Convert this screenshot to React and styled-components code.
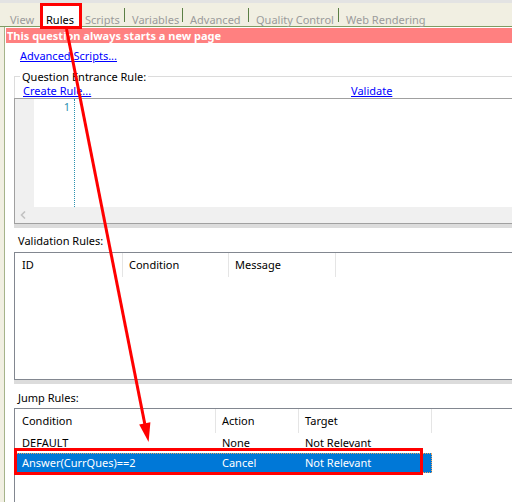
import React from "react";
import styled, { createGlobalStyle } from "styled-components";

const GlobalStyle = createGlobalStyle`
  html, body { margin: 0; padding: 0; background: #ffffff; }
  body {
    font-family: "Noto Sans", "Open Sans", sans-serif;
    font-size: 11px;
    color: #000000;
  }
  * { box-sizing: border-box; }
`;

const Frame = styled.div`
  position: relative;
  width: 512px;
  height: 502px;
  overflow: hidden;
  background: #ffffff;
`;

const TopStrip = styled.div`
  height: 3px;
  background: #e3e3e3;
`;

const TabBar = styled.div`
  display: flex;
  align-items: flex-start;
  height: 24px;
  padding-left: 6px;
  background: #f1efe2;
  border-bottom: 1px solid #7f9b63;
`;

const Tab = styled.div`
  flex: none;
  width: ${(p) => (p.$w ? `${p.$w}px` : "auto")};
  height: ${(p) => (p.$active ? 22 : 21)}px;
  margin-top: 2px;
  padding-top: ${(p) => (p.$active ? 7 : 8)}px;
  padding-left: ${(p) => p.$pad}px;
  line-height: 13px;
  white-space: nowrap;
  color: ${(p) => (p.$active ? "#000000" : "#9b9b9b")};
  background: ${(p) => (p.$active ? "#ffffff" : "transparent")};
  border: ${(p) => (p.$active ? "1px solid #9cae88" : "none")};
  border-bottom: none;
`;

const TabSep = styled.div`
  flex: none;
  width: 1px;
  height: 14px;
  margin-top: 5px;
  background: #5b7f45;
`;

const Body = styled.div`
  display: flex;
  height: 475px;
`;

const SideRail = styled.div`
  flex: none;
  width: 5px;
  background: #f1efe2;
  border-right: 1px solid #a5b38a;
`;

const Panel = styled.div`
  flex: 1;
  min-width: 0;
  padding-top: 1px;
  background: #ffffff;
`;

const Banner = styled.div`
  margin-left: 1px;
  height: 15px;
  padding-left: 1px;
  line-height: 15px;
  background: #ff8080;
  color: #ffffff;
  font-weight: 700;
  white-space: nowrap;
`;

const Content = styled.div`
  width: 560px;
  padding-left: 9px;
`;

const LinkRow = styled.div`
  height: 15px;
  margin-top: 5px;
  padding-left: 6px;
  line-height: 15px;
`;

const Link = styled.a`
  color: #0000ff;
  text-decoration: underline;
  cursor: pointer;
  white-space: nowrap;
`;

const Group = styled.fieldset`
  margin: 6px 0 0 0;
  padding: 0;
  min-width: 0;
  border: 1px solid #dcdcdc;
  border-right: none;
  border-bottom: none;
`;

const GroupLegend = styled.legend`
  margin-left: 5px;
  padding: 0 2px;
  line-height: 15px;
  height: 15px;
`;

const RuleLinks = styled.div`
  display: grid;
  grid-template-columns: 328px auto;
  height: 14px;
  padding-left: 8px;
  line-height: 14px;
`;

const Editor = styled.div`
  margin-left: -1px;
  border-top: 1px solid #a0a0a0;
  border-left: 1px solid #a0a0a0;
  border-bottom: 1px solid #a0a0a0;
`;

const CodeArea = styled.div`
  display: flex;
  height: 108px;
`;

const Gutter = styled.div`
  flex: none;
  width: 19px;
  background: #f0f0f0;
`;

const LineNums = styled.div`
  flex: none;
  width: 41px;
  padding-right: 4px;
  text-align: right;
  line-height: 15px;
  color: #2b91af;
  border-right: 1px dotted #2b91af;
`;

const CodeText = styled.div`
  flex: 1;
  background: #ffffff;
`;

const HScroll = styled.div`
  display: flex;
  align-items: center;
  height: 16px;
  padding-left: 5px;
  background: #f0f0f0;
`;

const Band = styled.div`
  height: 4px;
  background: #dcdcdc;
`;

const SectionLabel = styled.div`
  height: 15px;
  margin-top: ${(p) => p.$mt}px;
  padding-left: 4px;
  line-height: 15px;
  white-space: nowrap;
`;

const ListView = styled.div`
  margin-top: ${(p) => p.$mt}px;
  height: ${(p) => p.$h}px;
  padding-left: 1px;
  border: 1px solid #828790;
  border-right: none;
  background: #ffffff;
`;

const HeaderRow = styled.div`
  display: flex;
  height: 24px;
`;

const HeaderCell = styled.div`
  flex: none;
  width: ${(p) => p.$w}px;
  padding-left: 6px;
  line-height: 24px;
  white-space: nowrap;
  border-right: 1px solid #e5e5e5;
`;

const Row = styled.div`
  display: flex;
  width: fit-content;
  height: 20px;
  line-height: 20px;
  background: ${(p) => (p.$selected ? "#0078d7" : "transparent")};
  color: ${(p) => (p.$selected ? "#ffffff" : "#000000")};
  outline: ${(p) => (p.$selected ? "1px dotted #f0a35c" : "none")};
  outline-offset: -1px;
`;

const Cell = styled.div`
  flex: none;
  width: ${(p) => p.$w}px;
  padding-left: 6px;
  white-space: nowrap;
`;

const Overlay = styled.svg`
  position: absolute;
  left: 0;
  top: 0;
  width: 512px;
  height: 502px;
  pointer-events: none;
`;

const validationCols = [
  { label: "ID", w: 107 },
  { label: "Condition", w: 106 },
  { label: "Message", w: 107 },
];

const jumpCols = [
  { label: "Condition", w: 200 },
  { label: "Action", w: 83 },
  { label: "Target", w: 133 },
];

const jumpRows = [
  ["DEFAULT", "None", "Not Relevant"],
  ["Answer(CurrQues)==2", "Cancel", "Not Relevant"],
];

export default function App() {
  return (
    <>
      <GlobalStyle />
      <Frame>
        <TopStrip />
        <TabBar>
          <Tab $w={35} $pad={4}>View</Tab>
          <Tab $w={41} $pad={4} $active>Rules</Tab>
          <Tab $w={42} $pad={3}>Scripts</Tab>
          <TabSep />
          <Tab $w={57} $pad={7}>Variables</Tab>
          <TabSep />
          <Tab $w={65} $pad={7}>Advanced</Tab>
          <TabSep />
          <Tab $w={89} $pad={7}>Quality Control</Tab>
          <TabSep />
          <Tab $pad={7}>Web Rendering</Tab>
        </TabBar>
        <Body>
          <SideRail />
          <Panel>
            <Banner>This question always starts a new page</Banner>
            <Content>
              <LinkRow>
                <Link>Advanced Scripts...</Link>
              </LinkRow>
              <Group>
                <GroupLegend>Question Entrance Rule:</GroupLegend>
                <RuleLinks>
                  <Link>Create Rule...</Link>
                  <Link>Validate</Link>
                </RuleLinks>
                <Editor>
                  <CodeArea>
                    <Gutter />
                    <LineNums>1</LineNums>
                    <CodeText />
                  </CodeArea>
                  <HScroll>
                    <svg width="6" height="8" viewBox="0 0 6 8">
                      <polyline
                        points="5,0.5 1.5,4 5,7.5"
                        fill="none"
                        stroke="#c2c2c2"
                        strokeWidth="1.6"
                      />
                    </svg>
                  </HScroll>
                </Editor>
              </Group>
              <Band />
              <SectionLabel $mt={5}>Validation Rules:</SectionLabel>
              <ListView $mt={4} $h={128}>
                <HeaderRow>
                  {validationCols.map((c) => (
                    <HeaderCell key={c.label} $w={c.w}>{c.label}</HeaderCell>
                  ))}
                </HeaderRow>
              </ListView>
              <Band />
              <SectionLabel $mt={6}>Jump Rules:</SectionLabel>
              <ListView $mt={3} $h={120}>
                <HeaderRow>
                  {jumpCols.map((c) => (
                    <HeaderCell key={c.label} $w={c.w}>{c.label}</HeaderCell>
                  ))}
                </HeaderRow>
                {jumpRows.map((r, i) => (
                  <Row key={i} $selected={i === 1}>
                    {r.map((t, j) => (
                      <Cell key={j} $w={jumpCols[j].w}>{t}</Cell>
                    ))}
                  </Row>
                ))}
              </ListView>
            </Content>
          </Panel>
        </Body>
        <Overlay viewBox="0 0 512 502">
          <rect x="41.5" y="4.5" width="39" height="23" fill="none" stroke="#ff0000" strokeWidth="3" />
          <rect x="15.5" y="449.5" width="406" height="24" fill="none" stroke="#ff0000" strokeWidth="3" />
          <line x1="66.5" y1="29" x2="144.8" y2="424" stroke="#ff0000" strokeWidth="3" />
          <polygon points="139.2,424.5 150.4,422.3 148.6,442" fill="#ff0000" />
        </Overlay>
      </Frame>
    </>
  );
}
